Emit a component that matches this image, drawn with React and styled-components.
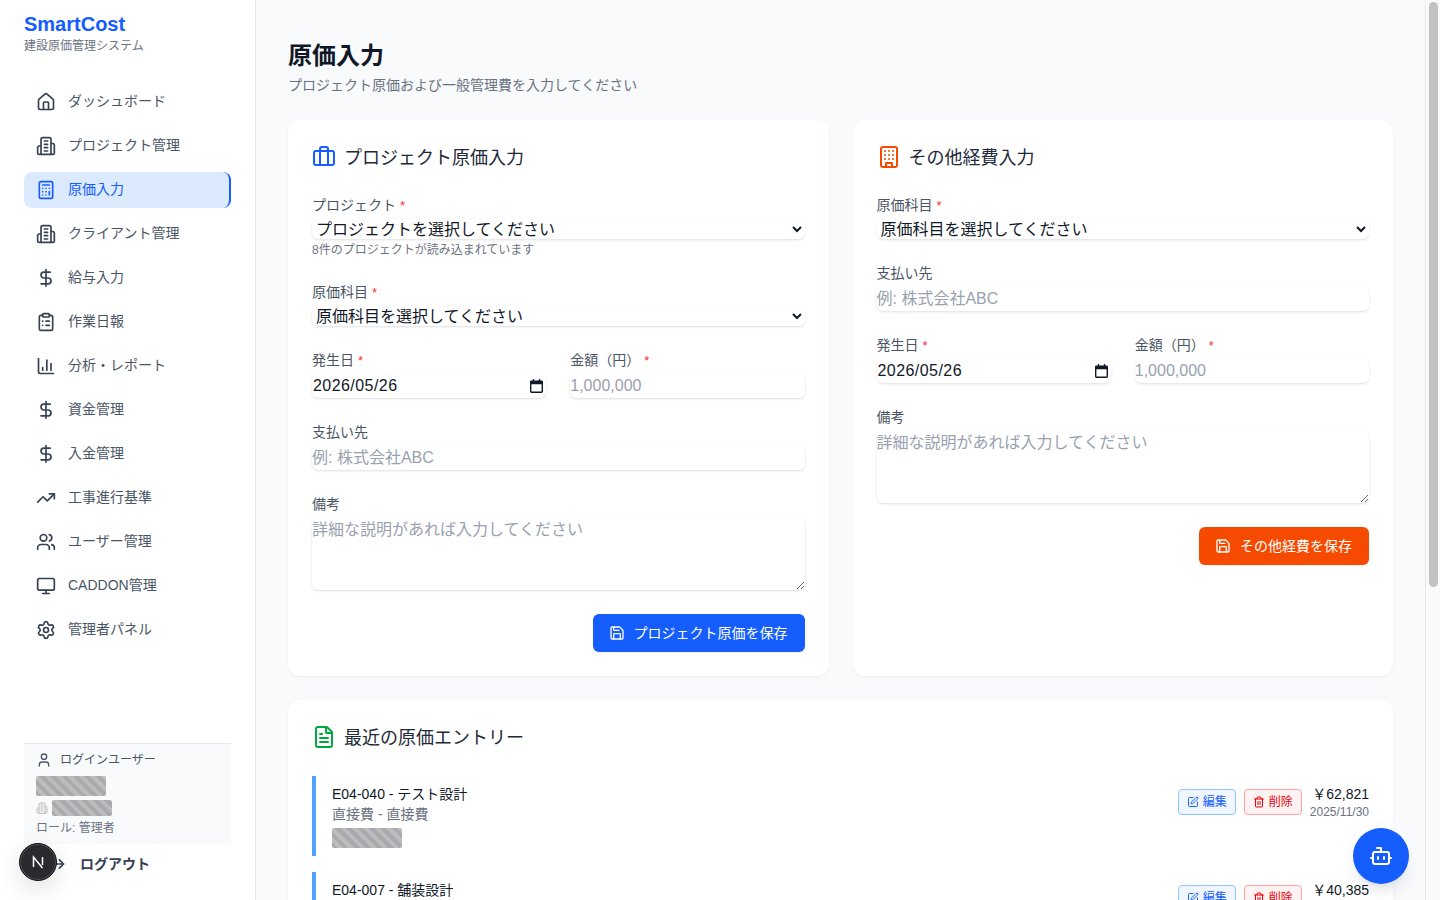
import React from "react";
import styled, { createGlobalStyle } from "styled-components";
import {
  Home, Calculator, DollarSign, ClipboardList, ChartColumn, TrendingUp, Users,
  Monitor, Settings, User, LogOut, Briefcase, FileText, Save, SquarePen, Trash2, Bot,
} from "lucide-react";

const Global = createGlobalStyle`
  *, *::before, *::after { box-sizing: border-box; margin: 0; padding: 0; border: 0 solid #e5e7eb; }
  html, body, #root { height: 100%; }
  body { font-family: "Liberation Sans", "Noto Sans CJK JP", sans-serif; color: #101828; overflow: hidden; line-height: 1.5; }
  input::placeholder, textarea::placeholder { color: #99a1af; opacity: 1; }
`;

const Shell = styled.div`display: flex; height: 100vh; background: #f9fafb;`;
const Sidebar = styled.aside`
  width: 256px; flex: none; background: #fff; border-right: 1px solid #e5e7eb;
  display: flex; flex-direction: column; padding: 10px 24px 16px;
`;
const Brand = styled.div`font-size: 20px; line-height: 28px; font-weight: 700; color: #155dfc;`;
const Tagline = styled.div`font-size: 12px; line-height: 16px; color: #6a7282;`;
const Nav = styled.nav`flex: 1; margin-top: 30px; display: flex; flex-direction: column; gap: 8px;`;
const NavItem = styled.a`
  display: flex; align-items: center; gap: 12px; height: 36px; padding: 0 12px; font-size: 14px;
  border-radius: 8px; color: ${p => (p.$active ? "#155dfc" : "#4a5565")};
  background: ${p => (p.$active ? "#dbeafe" : "transparent")};
  border-right: ${p => (p.$active ? "2px solid #155dfc" : "0")};
  svg { color: ${p => (p.$active ? "#155dfc" : "#364153")}; flex: none; }
`;
const NavLabel = styled.span`padding-bottom: 2px;`;
const UserPanel = styled.div`
  border-top: 1px solid #e5e7eb; background: #f9fafb; padding: 8px 12px 8px; height: 101px;
  font-size: 12px; line-height: 16px; color: #4a5565;
`;
const UserHead = styled.div`display: flex; align-items: center; gap: 8px; margin-bottom: 8px; svg { color: #4a5565; }`;
const Redacted = styled.span`
  display: block; width: ${p => p.$w}px; height: ${p => p.$h}px; border-radius: 2px;
  background: repeating-linear-gradient(45deg, #a8aaad 0 4px, #bbbcbd 4px 8px);
`;
const OrgRow = styled.div`display: flex; align-items: center; gap: 4px; margin-top: 4px; svg { color: #bbb; }`;
const Role = styled.div`color: #6a7282; margin-top: 4px;`;
const Logout = styled.a`
  display: flex; align-items: center; gap: 14px; height: 40px; padding-left: 22px; font-size: 14px;
  font-weight: 700; color: #364153; svg { color: #364153; }
`;

const Main = styled.main`
  flex: 1; min-width: 0; overflow-y: auto; padding: 39px 32px 32px;
`;
const ScrollTrack = styled.div`
  width: 15px; flex: none; background: #fafafa; border-left: 1px solid #e8e8e8; padding: 2px 2px 0 3px;
`;
const ScrollThumb = styled.div`height: 585px; background: #c1c1c1; border-radius: 5px;`;
const Title = styled.h1`font-size: 24px; line-height: 32px; font-weight: 600; color: #101828; padding-top: 1px;`;
const Subtitle = styled.p`font-size: 14px; line-height: 20px; color: #6a7282; margin-top: 3px; margin-bottom: 25px;`;
const Columns = styled.div`display: grid; grid-template-columns: 1fr 1fr; gap: 24px; margin-bottom: 24px;`;
const Card = styled.section`
  background: #fff; border-radius: 12px; padding: 23px 24px 24px;
  box-shadow: 0 1px 3px rgba(0,0,0,.05), 0 1px 2px -1px rgba(0,0,0,.05);
`;
const CardHead = styled.div`
  display: flex; align-items: center; gap: 8px; height: 28px; margin-bottom: 24px;
  font-size: 18px; line-height: 28px; font-weight: 400; color: #1e2939;
  svg { color: ${p => p.$color}; flex: none; }
`;
const CardTitle = styled.span`padding-top: 2px;`;
const Form = styled.div`display: flex; flex-direction: column; gap: 24px;`;
const Field = styled.div`display: flex; flex-direction: column; min-width: 0;`;
const Label = styled.label`display: block; font-size: 14px; line-height: 20px; color: #4a5565; margin-bottom: 4px;`;
const Star = styled.span`color: #fb2c36; margin-left: 4px; font-size: 13px; line-height: 0;`;
const fieldCss = `
  width: 100%; font: inherit; font-size: 16px; color: #101828; background: #fff; border-radius: 6px;
  box-shadow: 0 1px 3px rgba(0,0,0,.1), 0 1px 2px -1px rgba(0,0,0,.1); outline: none; border: 0;
`;
const Select = styled.select`${fieldCss} height: 20px; line-height: 20px;`;
const Input = styled.input`${fieldCss} height: 24px; line-height: 24px;`;
const DateBox = styled.div`${fieldCss} height: 24px; display: flex; align-items: center; padding: 0 3px 0 1px;`;
const DateText = styled.input`flex: 1; min-width: 0; font: inherit; font-size: 16px; letter-spacing: .44px; color: #101828; outline: none; border: 0; background: transparent;`;
const Area = styled.textarea`${fieldCss} height: 72px; line-height: 24px; display: block;`;
const Hint = styled.p`font-size: 12px; line-height: 16px; color: #6a7282; margin-top: 3px;`;
const Two = styled.div`display: grid; grid-template-columns: 1fr 1fr; gap: 24px;`;
const Actions = styled.div`display: flex; justify-content: flex-end;`;
const SaveBtn = styled.button`
  display: flex; align-items: center; gap: 9px; height: 38px; padding: 0 17px 0 16px; border-radius: 6px;
  font: inherit; font-size: 14px; color: #fff; background: ${p => p.$color};
  box-shadow: 0 1px 2px rgba(0,0,0,.05);
`;
const Entries = styled.div`display: flex; flex-direction: column; gap: 16px; margin-top: 25px;`;
const Entry = styled.div`
  display: flex; justify-content: space-between; height: 80px; padding: 8px 0 8px 16px; border-left: 4px solid #51a2ff;
`;
const EntryName = styled.div`font-size: 14px; line-height: 20px; color: #101828;`;
const EntryMeta = styled.div`font-size: 14px; line-height: 20px; color: #6a7282; margin-bottom: 4px;`;
const EntryRight = styled.div`display: flex; align-items: flex-start; gap: 8px;`;
const Mini = styled.button`
  display: flex; align-items: center; gap: 4px; height: 26px; padding: 0 8px; margin-top: 5px; border-radius: 4px;
  font: inherit; font-size: 12px; border: 1px solid ${p => p.$line}; color: ${p => p.$color}; background: ${p => p.$bg};
`;
const Money = styled.div`text-align: right; font-size: 14px; line-height: 20px; color: #101828; white-space: nowrap;`;
const MoneyDate = styled.div`font-size: 12px; line-height: 16px; color: #6a7282;`;
const Fab = styled.button`
  position: fixed; right: 31px; bottom: 16px; width: 56px; height: 56px; border-radius: 50%; background: #155dfc;
  color: #fff; display: flex; align-items: center; justify-content: center;
  box-shadow: 0 10px 15px -3px rgba(0,0,0,.1), 0 4px 6px -4px rgba(0,0,0,.1);
`;
const DevBadge = styled.div`
  position: fixed; left: 19px; top: 843px; width: 38px; height: 38px; border-radius: 50%; background: #2a2a2e;
  border: 1px solid #111; display: flex; align-items: center; justify-content: center;
  box-shadow: inset 0 0 0 1px #50505a, 0 8px 24px rgba(0,0,0,.12);
`;

const Building2 = ({ size = 20 }) => (
  <svg width={size} height={size} viewBox="0 0 24 24" fill="none" stroke="currentColor" strokeWidth="2" strokeLinecap="round" strokeLinejoin="round">
    <path d="M6 22V4a2 2 0 0 1 2-2h8a2 2 0 0 1 2 2v18Z" />
    <path d="M6 12H4a2 2 0 0 0-2 2v6a2 2 0 0 0 2 2h2" />
    <path d="M18 9h2a2 2 0 0 1 2 2v9a2 2 0 0 1-2 2h-2" />
    <path d="M10 6h4M10 10h4M10 14h4M10 18h4" />
  </svg>
);
const Building = ({ size = 24 }) => (
  <svg width={size} height={size} viewBox="0 0 24 24" fill="none" stroke="currentColor" strokeWidth="2" strokeLinecap="round" strokeLinejoin="round">
    <rect x="4" y="2" width="16" height="20" rx="2" />
    <path d="M9 22v-4h6v4" />
    <path d="M8 6h.01M16 6h.01M12 6h.01M12 10h.01M12 14h.01M16 10h.01M16 14h.01M8 10h.01M8 14h.01" />
  </svg>
);
const CalendarGlyph = () => (
  <svg width="13" height="14" viewBox="0 0 14 15" fill="#101828">
    <path fillRule="evenodd" d="M3 0h1.5v1.5h5V0H11v1.5h1.5A1.5 1.5 0 0 1 14 3v10.5a1.5 1.5 0 0 1-1.5 1.5h-11A1.5 1.5 0 0 1 0 13.5V3a1.5 1.5 0 0 1 1.5-1.5H3zM1.5 5.5v8h11v-8z" />
  </svg>
);

const nav = [
  [Home, "ダッシュボード"], [Building2, "プロジェクト管理"], [Calculator, "原価入力", true], [Building2, "クライアント管理"],
  [DollarSign, "給与入力"], [ClipboardList, "作業日報"], [ChartColumn, "分析・レポート"], [DollarSign, "資金管理"],
  [DollarSign, "入金管理"], [TrendingUp, "工事進行基準"], [Users, "ユーザー管理"], [Monitor, "CADDON管理"], [Settings, "管理者パネル"],
];
const entries = [
  ["E04-040 - テスト設計", "￥62,821", "2025/11/30"],
  ["E04-007 - 舗装設計", "￥40,385", "2025/11/30"],
  ["E04-012 - 測量業務", "￥28,500", "2025/11/28"],
  ["E04-021 - 地質調査", "￥75,000", "2025/11/25"],
  ["E04-033 - 構造設計", "￥51,240", "2025/11/20"],
  ["E04-036 - 外構工事", "￥33,600", "2025/11/18"],
];
const Req = () => <Star>*</Star>;
const Pick = ({ children }) => <Select defaultValue=""><option value="">{children}</option></Select>;
const DateInput = () => <DateBox><DateText defaultValue="2026/05/26" /><CalendarGlyph /></DateBox>;

export default function App() {
  return (
    <Shell lang="ja">
      <Global />
      <Sidebar>
        <Brand>SmartCost</Brand>
        <Tagline>建設原価管理システム</Tagline>
        <Nav>
          {nav.map(([Icon, label, active]) => (
            <NavItem key={label} $active={active}><Icon size={20} /><NavLabel>{label}</NavLabel></NavItem>
          ))}
        </Nav>
        <UserPanel>
          <UserHead><User size={16} />ログインユーザー</UserHead>
          <Redacted $w={70} $h={20} />
          <OrgRow><Building2 size={12} /><Redacted $w={60} $h={16} /></OrgRow>
          <Role>ロール: 管理者</Role>
        </UserPanel>
        <Logout><LogOut size={20} />ログアウト</Logout>
      </Sidebar>
      <Main>
        <Title>原価入力</Title>
        <Subtitle>プロジェクト原価および一般管理費を入力してください</Subtitle>
        <Columns>
          <Card>
            <CardHead $color="#155dfc"><Briefcase size={24} /><CardTitle>プロジェクト原価入力</CardTitle></CardHead>
            <Form>
              <Field>
                <Label>プロジェクト<Req /></Label>
                <Pick>プロジェクトを選択してください</Pick>
                <Hint>8件のプロジェクトが読み込まれています</Hint>
              </Field>
              <Field><Label>原価科目<Req /></Label><Pick>原価科目を選択してください</Pick></Field>
              <Two>
                <Field><Label>発生日<Req /></Label><DateInput /></Field>
                <Field><Label>金額（円）<Req /></Label><Input placeholder="1,000,000" /></Field>
              </Two>
              <Field><Label>支払い先</Label><Input placeholder="例: 株式会社ABC" /></Field>
              <Field><Label>備考</Label><Area placeholder="詳細な説明があれば入力してください" /></Field>
              <Actions><SaveBtn $color="#155dfc"><Save size={16} />プロジェクト原価を保存</SaveBtn></Actions>
            </Form>
          </Card>
          <Card>
            <CardHead $color="#f54a00"><Building size={24} /><CardTitle>その他経費入力</CardTitle></CardHead>
            <Form>
              <Field><Label>原価科目<Req /></Label><Pick>原価科目を選択してください</Pick></Field>
              <Field><Label>支払い先</Label><Input placeholder="例: 株式会社ABC" /></Field>
              <Two>
                <Field><Label>発生日<Req /></Label><DateInput /></Field>
                <Field><Label>金額（円）<Req /></Label><Input placeholder="1,000,000" /></Field>
              </Two>
              <Field><Label>備考</Label><Area placeholder="詳細な説明があれば入力してください" /></Field>
              <Actions><SaveBtn $color="#f54a00"><Save size={16} />その他経費を保存</SaveBtn></Actions>
            </Form>
          </Card>
        </Columns>
        <Card>
          <CardHead $color="#00a63e"><FileText size={24} /><CardTitle>最近の原価エントリー</CardTitle></CardHead>
          <Entries>
            {entries.map(([name, amount, date]) => (
              <Entry key={name}>
                <div>
                  <EntryName>{name}</EntryName>
                  <EntryMeta>直接費 - 直接費</EntryMeta>
                  <Redacted $w={70} $h={20} />
                </div>
                <EntryRight>
                  <Mini $line="#8ec5ff" $bg="#eff6ff" $color="#155dfc"><SquarePen size={12} />編集</Mini>
                  <Mini $line="#ffa2a2" $bg="#fef2f2" $color="#e7000b"><Trash2 size={12} />削除</Mini>
                  <Money>{amount}<MoneyDate>{date}</MoneyDate></Money>
                </EntryRight>
              </Entry>
            ))}
          </Entries>
        </Card>
      </Main>
      <ScrollTrack><ScrollThumb /></ScrollTrack>
      <Fab><Bot size={24} /></Fab>
      <DevBadge>
        <svg width="16" height="16" viewBox="0 0 16 16" fill="none" stroke="#fff" strokeWidth="1.5">
          <path d="M3.5 13V3L12.5 14M12.5 3v8" />
        </svg>
      </DevBadge>
    </Shell>
  );
}
